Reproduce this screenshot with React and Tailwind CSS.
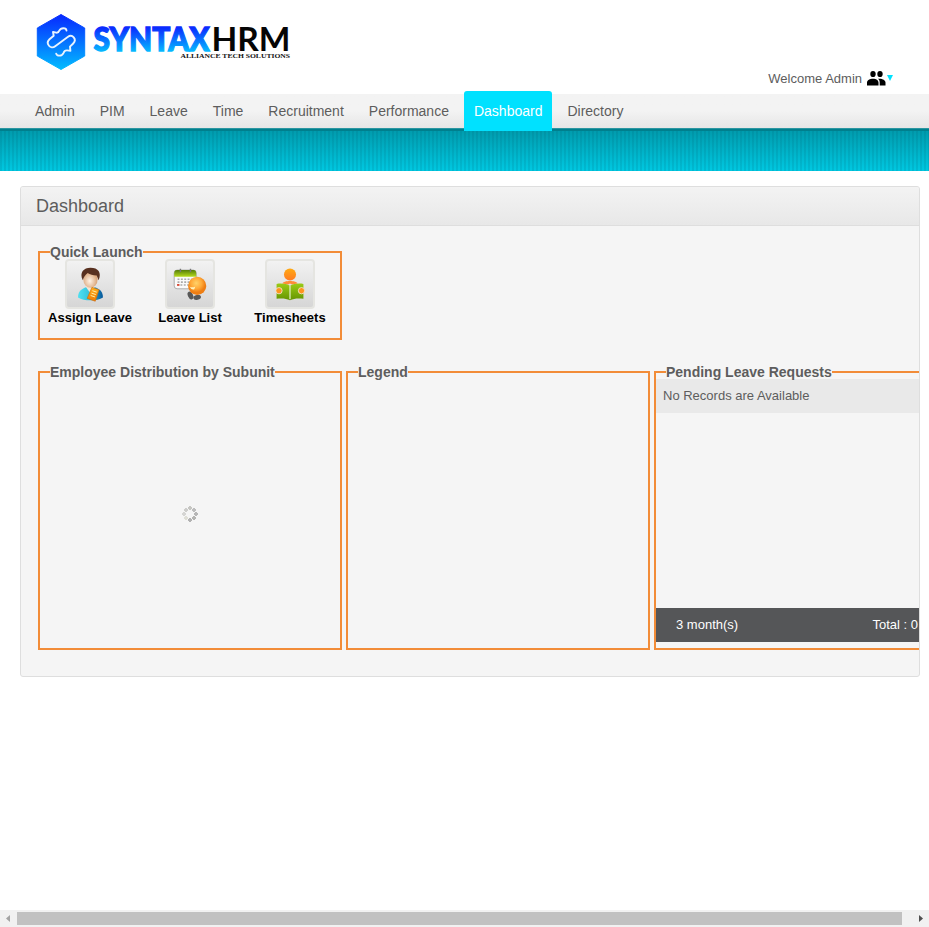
import React from "react";

const nav = ["Admin", "PIM", "Leave", "Time", "Recruitment", "Performance", "Dashboard", "Directory"];

function Logo() {
  return (
    <svg className="ml-[34px] mt-[10px] shrink-0" width="262" height="64" viewBox="34 10 262 64">
      <defs>
        <linearGradient id="hex" x1="0" y1="0" x2="0" y2="1">
          <stop offset="0" stopColor="#0728ff" />
          <stop offset="1" stopColor="#02bcff" />
        </linearGradient>
        <linearGradient id="word" gradientUnits="userSpaceOnUse" x1="0" y1="28" x2="0" y2="52">
          <stop offset="0" stopColor="#0a2cff" />
          <stop offset="1" stopColor="#05bdff" />
        </linearGradient>
      </defs>
      <path d="M61 14.500 84.700 28v28L61 69.500 37.300 56V28z" fill="url(#hex)" stroke="url(#hex)" strokeWidth="1" strokeLinejoin="round" />
      <path
        d="M66.500 30.500c-.3-2.700-5.500-3.200-7.200.2-.7 1.600-2.300 2.300-4 1.700l-2.300-.4.700 3.700-4.200 3.600c-4.500 4.300 1.200 10.600 5.700 6.900L67.700 37c4.600-3.400 9.600 2.300 5.500 6.500l-3.200 3.200.4 4.200-3.300-.5c-1.800-.2-3 .9-3.700 2.700-1.500 3.500-6.400 3-7.200.6"
        fill="none" stroke="#e8f3ff" strokeWidth="1.9" strokeLinecap="round" strokeLinejoin="round"
      />
      <text x="93.500" y="50.700" fill="url(#word)" stroke="url(#word)" strokeWidth="1.300" fontFamily="Lato, sans-serif" fontWeight="900" fontSize="31.500" textLength="116" lengthAdjust="spacingAndGlyphs">SYNTAX</text>
      <text x="211.500" y="51" fill="#050505" fontFamily="Lato, sans-serif" fontWeight="700" fontSize="32" textLength="79" lengthAdjust="spacingAndGlyphs">HRM</text>
      <text x="180.500" y="58.200" fill="#111" fontFamily="Liberation Serif, serif" fontWeight="700" fontSize="7" textLength="109.500" lengthAdjust="spacingAndGlyphs">ALLIANCE TECH SOLUTIONS</text>
    </svg>
  );
}

function AssignIcon() {
  return (
    <svg width="48" height="48" viewBox="0 0 48 48">
      <defs>
        <linearGradient id="shirt"><stop offset="0" stopColor="#4fe0f0" /><stop offset=".45" stopColor="#35c3dc" /><stop offset="1" stopColor="#06569a" /></linearGradient>
        <radialGradient id="face" cx=".45" cy=".6"><stop offset="0" stopColor="#fff3e6" /><stop offset="1" stopColor="#dba77c" /></radialGradient>
        <linearGradient id="note" x1="0" y1="0" x2="0" y2="1"><stop offset="0" stopColor="#ffb01c" /><stop offset="1" stopColor="#ee7b05" /></linearGradient>
      </defs>
      <path d="M11.500 38c0-6 3-9 9-11h8c6 2 9 5 9 11-6 4-20 4-26 0z" fill="url(#shirt)" />
      <path d="m19 26 5 7 6-7z" fill="#f4e4d4" />
      <ellipse cx="24.500" cy="19" rx="7.500" ry="9" fill="url(#face)" />
      <path d="M16.500 20c-4-8 1-13 8-13 8 0 12 5 8.500 13l-2-5c-4 0-7-1-9.500-2.500-2 2-3.500 3-5 7.500z" fill="#58301f" />
      <path d="m26 27.500 7.500 2.500-4 12-8.500-3z" fill="url(#note)" stroke="#c8680a" strokeWidth=".6" />
      <path d="m26.500 31 4.500 1.500m-5.500 1 4.500 1.500m-5.300 1 4.500 1.500" stroke="#fff2b0" strokeWidth="1" />
    </svg>
  );
}

function LeaveIcon() {
  return (
    <svg width="48" height="48" viewBox="0 0 48 48">
      <defs>
        <linearGradient id="cal" x1="0" y1="0" x2="0" y2="1"><stop offset="0" stopColor="#557f08" /><stop offset="1" stopColor="#b8dc1e" /></linearGradient>
        <radialGradient id="ball" cx=".45" cy=".35"><stop offset="0" stopColor="#ffd36a" /><stop offset=".6" stopColor="#ffa938" /><stop offset="1" stopColor="#ee7e14" /></radialGradient>
      </defs>
      <rect x="7.500" y="9.500" width="23" height="19.500" rx="3" fill="#fafafa" stroke="#aaa" />
      <path d="M7.500 16.500V13q0-3.500 3-3.500h17q3 0 3 3.500v3.500z" fill="url(#cal)" />
      <path d="M14 8v3.500M24.500 8v3.500" stroke="#777" strokeWidth="1.500" />
      <path d="M11 19h17M11 22h14M14 25h9" stroke="#aaa" strokeWidth="1.700" strokeDasharray="2 1.500" />
      <path d="M10.500 25h2.500" stroke="#d84b38" strokeWidth="2" />
      <ellipse cx="24.500" cy="36" rx="2.700" ry="4.200" transform="rotate(-25 24.500 36)" fill="#585858" />
      <ellipse cx="31.500" cy="38" rx="4" ry="2.500" transform="rotate(-12 31.500 38)" fill="#585858" />
      <circle cx="31.500" cy="26" r="9.500" fill="url(#ball)" />
      <path d="M23.500 26.500q3 2 6 0l-1 3q-3 1-5-3" fill="#fff2bb" />
    </svg>
  );
}

function TimesheetIcon() {
  return (
    <svg width="48" height="48" viewBox="0 0 48 48">
      <defs>
        <linearGradient id="book" x1="0" y1="0" x2="0" y2="1"><stop offset="0" stopColor="#9acb16" /><stop offset="1" stopColor="#659400" /></linearGradient>
        <linearGradient id="head" x1="0" y1="0" x2="0" y2="1"><stop offset="0" stopColor="#ffaa12" /><stop offset="1" stopColor="#ff7b22" /></linearGradient>
      </defs>
      <circle cx="24" cy="14" r="6.300" fill="url(#head)" />
      <path d="M16 23.500c1-3.500 15-3.500 16 0l-6 1-2-1-2 1z" fill="#ff8c37" />
      <path d="M10 24c5-1 11 0 14 2 3-2 9-3 14-2v15.500c-5-1-10-.5-14 1.500-4-2-9-2.500-14-1.500z" fill="url(#book)" />
      <path d="M24 26v14" stroke="#e3efc4" strokeWidth="1.300" />
      <circle cx="12.500" cy="31" r="3.300" fill="#ff941e" stroke="#f5eee0" strokeWidth=".8" />
      <circle cx="36" cy="31" r="3.300" fill="#ff941e" stroke="#f5eee0" strokeWidth=".8" />
    </svg>
  );
}

function Launch({ label, children }) {
  return (
    <div className="flex w-[100px] flex-col items-center">
      <div className="flex h-[50px] w-[50px] items-center justify-center rounded-[4px] border-2 border-[#e5e5e1] bg-linear-to-b from-[#f2f2f2] to-[#d6d6d6]">{children}</div>
      <div className="text-[13px] leading-[17px] font-bold whitespace-nowrap text-black">{label}</div>
    </div>
  );
}

function Panel({ title, className, children }) {
  return (
    <fieldset className={`w-[304px] shrink-0 border-2 border-[#f28c38] ${className}`}>
      <legend className="ml-[10px] h-[16px] text-[14px] leading-[16px] font-bold whitespace-nowrap text-[#5d5d5d]">{title}</legend>
      {children}
    </fieldset>
  );
}

function Spinner() {
  const dots = [[8, 2, "#c6c6c2"], [12, 4, "#bdbdbd"], [14, 8, "#b6b6b6"], [12, 12, "#b4b4b2"], [8, 14, "#b2b2b2"], [4, 12, "#deded6"], [2, 8, "#d5d5d3"], [4, 4, "#cdcdcb"]];
  return (
    <svg width="16" height="16" viewBox="0 0 16 16" shapeRendering="crispEdges">
      {dots.map(([x, y, c], i) => <path key={i} fill={c} d={`M${x - 1} ${y - 2}h2v1h1v2h-1v1h-2v-1h-1v-2h1z`} />)}
    </svg>
  );
}

export default function App() {
  return (
    <div className="flex h-[927px] w-[929px] flex-col overflow-hidden bg-white font-['Liberation_Sans',Arial,sans-serif] text-[#5d5d5d]">
      <header className="flex h-[94px] shrink-0 justify-between">
        <Logo />
        <div className="mt-[69px] mr-[36px] flex h-[18px] items-center">
          <span className="pt-[2px] text-[13px] leading-[18px]">Welcome Admin</span>
          <svg className="ml-[5px]" width="19" height="16" viewBox="0 0 19 16">
            <ellipse cx="6" cy="4" rx="2.700" ry="3.100" /><ellipse cx="13" cy="4" rx="2.700" ry="3.100" />
            <path d="M0 15.500v-3C0 10 3 8.700 6 8.700s5.500 1.300 5.500 3.800v3zM12.700 15.500v-3c0-1.700-.6-2.800-1.700-3.700 4-.6 7.500 1.200 7.500 3.700v3z" />
          </svg>
          <svg className="ml-px" width="6" height="6" viewBox="0 0 6 6"><path d="M0 0h6L3 6z" fill="#00e1ff" /></svg>
        </div>
      </header>
      <nav className="flex h-[34px] shrink-0 items-center gap-[5px] bg-linear-to-b from-[#f3f3f3] from-50% to-[#e6e6e6] pl-[25px] text-[14px]">
        {nav.map((n) => (
          <span key={n} className={n === "Dashboard" ? "relative -my-[3px] h-[40px] rounded-t-[3px] bg-[#00e1ff] px-[10px] leading-[40px] text-white" : "px-[10px] leading-[34px]"}>{n}</span>
        ))}
      </nav>
      <div className="h-px shrink-0 bg-[#2b96a1]" />
      <div className="h-[42px] shrink-0 border-t-2 border-[#007f8d] bg-[repeating-linear-gradient(90deg,rgba(0,80,100,0.12)_0_2px,transparent_2px_4px),linear-gradient(#009cae,#00c8e1)]" />
      <main className="mt-[15px] ml-[20px] flex h-[491px] w-[900px] shrink-0 flex-col overflow-hidden rounded-[3px] border border-[#dedede] bg-[#f5f5f5]">
        <h1 className="h-[39px] shrink-0 border-b border-[#dedede] bg-linear-to-b from-[#f3f3f3] to-[#e8e8e8] pl-[15px] text-[18px] leading-[38px]">Dashboard</h1>
        <div className="flex flex-col pt-[18px] pl-[17px]">
          <Panel title="Quick Launch" className="h-[96px]">
            <div className="-mt-px flex">
              <Launch label="Assign Leave"><AssignIcon /></Launch>
              <Launch label="Leave List"><LeaveIcon /></Launch>
              <Launch label="Timesheets"><TimesheetIcon /></Launch>
            </div>
          </Panel>
          <div className="mt-[24px] flex gap-[4px]">
            <Panel title="Employee Distribution by Subunit" className="h-[286px]">
              <div className="flex h-[268px] items-center justify-center"><Spinner /></div>
            </Panel>
            <Panel title="Legend" className="h-[286px]" />
            <Panel title="Pending Leave Requests" className="h-[286px]">
              <div className="-mt-px h-[34px] bg-[#e9e9e9] pl-[7px] text-[13px] leading-[33px]">No Records are Available</div>
              <div className="mt-[195px] flex h-[34px] justify-between bg-[#555658] pr-[38px] pl-[20px] text-[13px] leading-[33px] text-white">
                <span>3 month(s)</span><span>Total : 0</span>
              </div>
            </Panel>
          </div>
        </div>
      </main>
      <div className="mt-auto flex h-[17px] shrink-0 items-center bg-[#f1f1f1] pl-[6px]">
        <svg width="4" height="7" viewBox="0 0 4 7"><path d="M4 0v7L0 3.500z" fill="#a3a3a3" /></svg>
        <div className="ml-[7px] h-[13px] w-[885px] bg-[#c1c1c1]" />
        <svg className="ml-[17px]" width="4" height="7" viewBox="0 0 4 7"><path d="M0 0v7l4-3.500z" fill="#505050" /></svg>
      </div>
    </div>
  );
}
